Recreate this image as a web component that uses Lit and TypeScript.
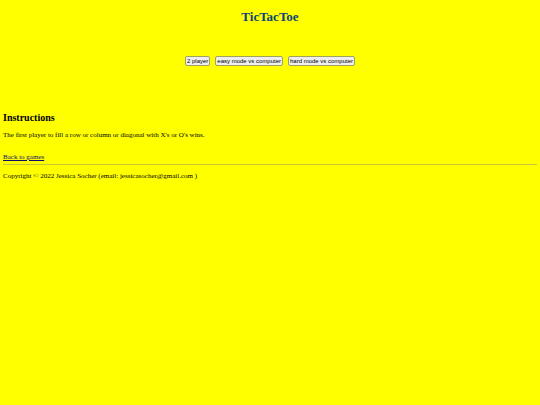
import { LitElement, html, css } from "lit";
import { customElement } from "lit/decorators.js";

@customElement("app-root")
export class AppRoot extends LitElement {
  static styles = css`
    :host {
      display: block;
      box-sizing: border-box;
      min-height: 100vh;
      padding: 10px 3px 0;
      background: #ffff00;
      color: #000;
      font-family: "Liberation Serif", "Times New Roman", serif;
      font-size: 7px;
      line-height: 8px;
    }
    h1 {
      margin: 0;
      text-align: center;
      font-size: 13px;
      line-height: 14px;
      color: #0a4478;
    }
    .modes {
      display: flex;
      justify-content: center;
      gap: 5px;
      margin: 32px 0 46px;
    }
    .mode {
      box-sizing: border-box;
      height: 10px;
      padding: 0 1px;
      border: 1px solid #a0a060;
      border-radius: 2px;
      background: #efefef;
      color: #000;
      font: 6px/8px "Liberation Sans", Arial, sans-serif;
    }
    h2 {
      margin: 0 0 7px;
      font-size: 10px;
      line-height: 12px;
    }
    p {
      margin: 0;
    }
    .back {
      display: block;
      width: fit-content;
      margin-top: 14px;
      color: #0c0c70;
    }
    hr {
      margin: 3px 0 7px;
      border: 0;
      border-top: 1px solid #c8c830;
    }
  `;

  private modes = ["2 player", "easy mode vs computer", "hard mode vs computer"];

  render() {
    return html`
      <main>
        <h1>TicTacToe</h1>
        <div class="modes">
          ${this.modes.map((m) => html`<button class="mode" type="button">${m}</button>`)}
        </div>
        <h2>Instructions</h2>
        <p>The first player to fill a row or column or diagonal with X's or O's wins.</p>
        <a class="back" href="#games">Back to games</a>
      </main>
      <hr />
      <footer>Copyright © 2022 Jessica Socher (email: jessicasocher@gmail.com )</footer>
    `;
  }
}
